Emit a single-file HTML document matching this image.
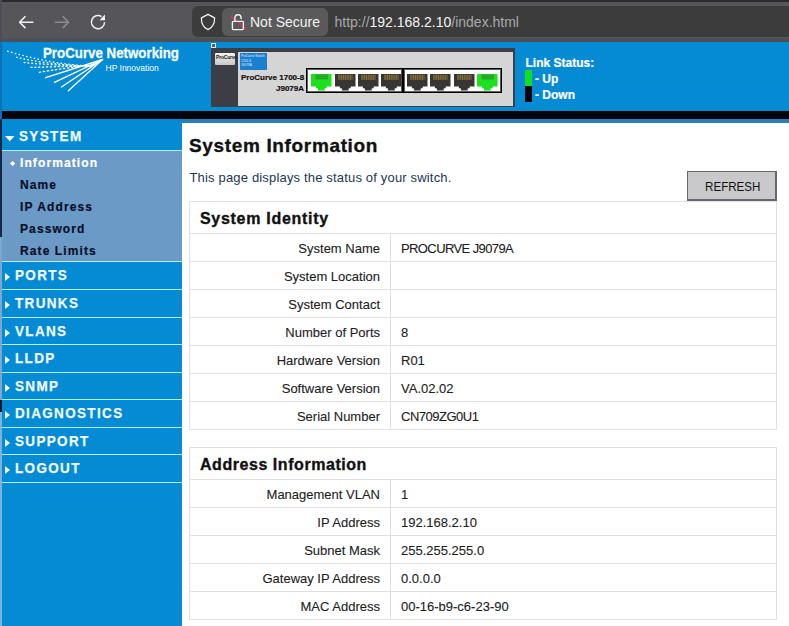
<!DOCTYPE html>
<html><head><meta charset="utf-8">
<style>
*{margin:0;padding:0;box-sizing:border-box}
html,body{width:789px;height:626px;overflow:hidden;background:#fff;font-family:"Liberation Sans",sans-serif}
.a{position:absolute}
#tb{left:0;top:0;width:789px;height:42px;background:#56555a}
#tbtop{left:0;top:0;width:789px;height:2px;background:#2a2a2f}
#tbbot{left:0;top:38px;width:789px;height:4px;background:#4c5157}
#lstrip{left:0;top:0;width:2px;height:626px;background:linear-gradient(#4a4e58 0,#4a4e58 42px,#0a72b4 42px,#0a72b4 119px,#14284a 119px,#14284a 237px,#7aa8d0 237px,#7aa8d0 400px,#101830 400px,#101830 412px,#7ab4dc 412px,#7ab4dc 626px)}
#url{left:192px;top:6px;width:600px;height:31px;border-radius:6px;background:#3c3c3d}
#pill{left:222px;top:8px;width:106px;height:28px;border-radius:6px;background:#5a5a5b}
#hdr{left:2px;top:42px;width:787px;height:69px;background:#058ad4}
#blk{left:2px;top:111px;width:787px;height:8px;background:#04040c}
#strip{left:182px;top:119px;width:607px;height:4px;background:#2a7db5}
#side{left:2px;top:119px;width:180px;height:507px;background:#058ad4}
#content{left:182px;top:123px;width:607px;height:503px;background:#fff}
.sep{position:absolute;left:2px;width:180px;height:1px;background:#b4f2fb}
.mi{position:absolute;left:15px;color:#f0fbff;-webkit-text-stroke:0.25px #f0fbff;font-weight:bold;font-size:15.5px;letter-spacing:1.55px;line-height:15px;transform:scaleX(0.87);transform-origin:0 0;white-space:pre}
.tri{position:absolute;left:4.5px;width:0;height:0;border-top:4.8px solid transparent;border-bottom:4.8px solid transparent;border-left:5.8px solid #f0fbff}
.si{position:absolute;left:20px;color:#0b0f2a;font-weight:bold;font-size:12px;letter-spacing:1.1px;line-height:12px;-webkit-text-stroke:0.2px currentColor}
.lab,.val{-webkit-text-stroke:0.12px #1e1e1e}
#h1,#th1,#th2{-webkit-text-stroke:0.35px #111}
#t_ls,#t_up,#t_down{-webkit-text-stroke:0.2px #fff}
#t_pc17,#t_j9{-webkit-text-stroke:0.2px #111}
</style></head><body>
<div id="tb" class="a"></div>
<div id="tbtop" class="a"></div>
<div id="tbbot" class="a"></div>
<div id="url" class="a"></div>
<div id="pill" class="a"></div>
<div id="hdr" class="a"></div>
<div id="blk" class="a"></div>
<div id="side" class="a"></div>
<div id="strip" class="a"></div>
<!-- logo -->
<svg class="a" style="left:0;top:42px" width="200" height="69" viewBox="0 42 200 69">
  <g stroke="#ffffff" stroke-width="1.25" fill="none" stroke-linecap="butt">
    <path d="M7.2 51.1 Q50 64 90 66 L102.5 59.5" stroke-dasharray="1.6 2.3"/>
    <path d="M16 57.2 Q50 65 90 66 L102.5 59.5" stroke-dasharray="1.8 2.1"/>
    <path d="M23.6 62.5 Q55 65.5 90 66 L102.5 59.5" stroke-dasharray="2 1.9"/>
    <path d="M30.4 67.4 Q60 66.5 90 66 L102.5 59.5" stroke-dasharray="2.2 1.7"/>
    <path d="M38.8 72.4 Q65 68 92 65 L102.5 59.5" stroke-dasharray="2.5 1.6"/>
  </g>
  <g stroke="#ffffff" stroke-width="1.35" fill="none" stroke-linecap="round">
    <path d="M45.6 77.7 L102.5 59.5"/>
    <path d="M54.5 82.3 L102.5 59.5"/>
    <path d="M61.5 87 L102.5 59.5"/>
    <path d="M68.4 90.8 L102.5 59.5"/>
  </g>
</svg>
<div id="t_pcn" class="a" style="left:43px;top:45px;font-size:14px;font-weight:bold;color:#f4fcff;line-height:16px;white-space:pre;letter-spacing:0px;transform:scaleX(0.95);transform-origin:0 0;-webkit-text-stroke:0.3px #f4fcff">ProCurve Networking</div>
<div id="t_hpi" class="a" style="left:105.5px;top:62.5px;font-size:8.5px;color:#fff;line-height:10px;white-space:pre">HP Innovation</div>
<!-- link status -->
<div id="t_ls" class="a" style="left:525.5px;top:55.5px;font-size:12px;font-weight:bold;color:#fff;line-height:14px;white-space:pre">Link Status:</div>
<div class="a" style="left:525px;top:70px;width:7px;height:16px;background:#10e020"></div>
<div class="a" style="left:525px;top:86px;width:7px;height:15.5px;background:#050510"></div>
<div id="t_up" class="a" style="left:535px;top:72px;font-size:12px;font-weight:bold;color:#fff;line-height:14px;white-space:pre">- Up</div>
<div id="t_down" class="a" style="left:535px;top:88px;font-size:12px;font-weight:bold;color:#fff;line-height:14px;white-space:pre">- Down</div>
<!-- switch -->
<div class="a" style="left:211px;top:43px;width:5px;height:5px;border:1px solid #e8e8f0;background:#3a6a9a"></div>
<div class="a" style="left:211px;top:48px;width:304px;height:59px;background:#3d3e45"></div>
<div class="a" style="left:238px;top:52px;width:275px;height:53.5px;background:#d5d5d5"></div>
<div class="a" style="left:215px;top:53px;width:20px;height:12px;background:linear-gradient(#f0f0f0,#c8c8c8);border-radius:1px"></div>
<div class="a" style="left:216px;top:55px;font-size:5px;font-weight:bold;color:#222;line-height:5px;letter-spacing:-0.2px">ProCurve</div>
<div class="a" style="left:240px;top:53px;width:27px;height:17px;background:#1b7fd0"></div>
<div class="a" style="left:241px;top:54px;font-size:3.2px;color:#e0f0ff;line-height:4.5px">ProCurve Switch<br>1700-8<br>J9079A</div>
<div id="t_pc17" class="a" style="left:241px;top:73px;font-size:8px;font-weight:bold;color:#111;line-height:10px;white-space:pre">ProCurve 1700-8</div>
<div id="t_j9" class="a" style="left:276px;top:83.5px;font-size:8px;font-weight:bold;color:#111;line-height:10px;white-space:pre">J9079A</div>
<div class="a" style="left:306px;top:68px;width:97px;height:25px;border:1px solid #000;box-shadow:inset 0 0 0 1px #5a5a5a;background:#fdfdfd"></div>
<div class="a" style="left:403px;top:68px;width:99px;height:25px;border:1px solid #000;box-shadow:inset 0 0 0 1px #5a5a5a;background:#fdfdfd"></div>
<svg class="a" style="left:311px;top:74px" width="21" height="17" viewBox="0 0 21 17"><path d="M0 0 H20.5 V12.4 H15.7 V14.3 H13.7 V16.6 H6.9 V14.3 H4.9 V12.4 H0 Z" fill="#1fe01f"/><rect x="4.5" y="0.5" width="12.5" height="5" fill="#28a828"/></svg>
<svg class="a" style="left:334.5px;top:74px" width="21" height="17" viewBox="0 0 21 17"><path d="M0 0 H20.5 V12.4 H15.7 V14.3 H13.7 V16.6 H6.9 V14.3 H4.9 V12.4 H0 Z" fill="#383632"/><rect x="3" y="0.8" width="14.5" height="5" fill="#84723e"/><rect x="3.6" y="0.8" width="0.7" height="5" fill="#4a4030"/><rect x="5.4" y="0.8" width="0.7" height="5" fill="#4a4030"/><rect x="7.2" y="0.8" width="0.7" height="5" fill="#4a4030"/><rect x="9.0" y="0.8" width="0.7" height="5" fill="#4a4030"/><rect x="10.8" y="0.8" width="0.7" height="5" fill="#4a4030"/><rect x="12.6" y="0.8" width="0.7" height="5" fill="#4a4030"/><rect x="14.4" y="0.8" width="0.7" height="5" fill="#4a4030"/><rect x="16.2" y="0.8" width="0.7" height="5" fill="#4a4030"/></svg>
<svg class="a" style="left:357.9px;top:74px" width="21" height="17" viewBox="0 0 21 17"><path d="M0 0 H20.5 V12.4 H15.7 V14.3 H13.7 V16.6 H6.9 V14.3 H4.9 V12.4 H0 Z" fill="#383632"/><rect x="3" y="0.8" width="14.5" height="5" fill="#84723e"/><rect x="3.6" y="0.8" width="0.7" height="5" fill="#4a4030"/><rect x="5.4" y="0.8" width="0.7" height="5" fill="#4a4030"/><rect x="7.2" y="0.8" width="0.7" height="5" fill="#4a4030"/><rect x="9.0" y="0.8" width="0.7" height="5" fill="#4a4030"/><rect x="10.8" y="0.8" width="0.7" height="5" fill="#4a4030"/><rect x="12.6" y="0.8" width="0.7" height="5" fill="#4a4030"/><rect x="14.4" y="0.8" width="0.7" height="5" fill="#4a4030"/><rect x="16.2" y="0.8" width="0.7" height="5" fill="#4a4030"/></svg>
<svg class="a" style="left:381px;top:74px" width="21" height="17" viewBox="0 0 21 17"><path d="M0 0 H20.5 V12.4 H15.7 V14.3 H13.7 V16.6 H6.9 V14.3 H4.9 V12.4 H0 Z" fill="#383632"/><rect x="3" y="0.8" width="14.5" height="5" fill="#84723e"/><rect x="3.6" y="0.8" width="0.7" height="5" fill="#4a4030"/><rect x="5.4" y="0.8" width="0.7" height="5" fill="#4a4030"/><rect x="7.2" y="0.8" width="0.7" height="5" fill="#4a4030"/><rect x="9.0" y="0.8" width="0.7" height="5" fill="#4a4030"/><rect x="10.8" y="0.8" width="0.7" height="5" fill="#4a4030"/><rect x="12.6" y="0.8" width="0.7" height="5" fill="#4a4030"/><rect x="14.4" y="0.8" width="0.7" height="5" fill="#4a4030"/><rect x="16.2" y="0.8" width="0.7" height="5" fill="#4a4030"/></svg>
<svg class="a" style="left:406.8px;top:74px" width="21" height="17" viewBox="0 0 21 17"><path d="M0 0 H20.5 V12.4 H15.7 V14.3 H13.7 V16.6 H6.9 V14.3 H4.9 V12.4 H0 Z" fill="#383632"/><rect x="3" y="0.8" width="14.5" height="5" fill="#84723e"/><rect x="3.6" y="0.8" width="0.7" height="5" fill="#4a4030"/><rect x="5.4" y="0.8" width="0.7" height="5" fill="#4a4030"/><rect x="7.2" y="0.8" width="0.7" height="5" fill="#4a4030"/><rect x="9.0" y="0.8" width="0.7" height="5" fill="#4a4030"/><rect x="10.8" y="0.8" width="0.7" height="5" fill="#4a4030"/><rect x="12.6" y="0.8" width="0.7" height="5" fill="#4a4030"/><rect x="14.4" y="0.8" width="0.7" height="5" fill="#4a4030"/><rect x="16.2" y="0.8" width="0.7" height="5" fill="#4a4030"/></svg>
<svg class="a" style="left:430.4px;top:74px" width="21" height="17" viewBox="0 0 21 17"><path d="M0 0 H20.5 V12.4 H15.7 V14.3 H13.7 V16.6 H6.9 V14.3 H4.9 V12.4 H0 Z" fill="#383632"/><rect x="3" y="0.8" width="14.5" height="5" fill="#84723e"/><rect x="3.6" y="0.8" width="0.7" height="5" fill="#4a4030"/><rect x="5.4" y="0.8" width="0.7" height="5" fill="#4a4030"/><rect x="7.2" y="0.8" width="0.7" height="5" fill="#4a4030"/><rect x="9.0" y="0.8" width="0.7" height="5" fill="#4a4030"/><rect x="10.8" y="0.8" width="0.7" height="5" fill="#4a4030"/><rect x="12.6" y="0.8" width="0.7" height="5" fill="#4a4030"/><rect x="14.4" y="0.8" width="0.7" height="5" fill="#4a4030"/><rect x="16.2" y="0.8" width="0.7" height="5" fill="#4a4030"/></svg>
<svg class="a" style="left:454px;top:74px" width="21" height="17" viewBox="0 0 21 17"><path d="M0 0 H20.5 V12.4 H15.7 V14.3 H13.7 V16.6 H6.9 V14.3 H4.9 V12.4 H0 Z" fill="#383632"/><rect x="3" y="0.8" width="14.5" height="5" fill="#84723e"/><rect x="3.6" y="0.8" width="0.7" height="5" fill="#4a4030"/><rect x="5.4" y="0.8" width="0.7" height="5" fill="#4a4030"/><rect x="7.2" y="0.8" width="0.7" height="5" fill="#4a4030"/><rect x="9.0" y="0.8" width="0.7" height="5" fill="#4a4030"/><rect x="10.8" y="0.8" width="0.7" height="5" fill="#4a4030"/><rect x="12.6" y="0.8" width="0.7" height="5" fill="#4a4030"/><rect x="14.4" y="0.8" width="0.7" height="5" fill="#4a4030"/><rect x="16.2" y="0.8" width="0.7" height="5" fill="#4a4030"/></svg>
<svg class="a" style="left:476.8px;top:74px" width="21" height="17" viewBox="0 0 21 17"><path d="M0 0 H20.5 V12.4 H15.7 V14.3 H13.7 V16.6 H6.9 V14.3 H4.9 V12.4 H0 Z" fill="#1fe01f"/><rect x="4.5" y="0.5" width="12.5" height="5" fill="#28a828"/></svg>

<div id="content" class="a"></div>

<!-- content -->
<div id="h1" class="a" style="left:189px;top:134.5px;font-size:19px;font-weight:bold;color:#111;letter-spacing:0.65px;line-height:22px;white-space:pre">System Information</div>
<div id="desc" class="a" style="left:189.5px;top:169.5px;font-size:13px;color:#1c3754;letter-spacing:0.17px;line-height:16px;white-space:pre">This page displays the status of your switch.</div>
<div id="btn" class="a" style="left:687px;top:171px;width:90px;height:30px;background:#c9c9cc;border:solid #66666e;border-width:1.5px 2px 2px 1.5px"></div>
<div id="btnt" class="a" style="left:704.5px;top:178.5px;font-size:13.5px;color:#111;letter-spacing:0px;line-height:16px;white-space:pre;transform:scaleX(0.86);transform-origin:0 0">REFRESH</div>
<div class="a" style="left:189px;top:201px;width:588px;height:229px;border:1px solid #dfe1e4"></div>
<div class="a" style="left:189px;top:233px;width:588px;height:1px;background:#dfe1e4"></div>
<div id="th1" class="a" style="left:200px;top:210px;font-size:16px;font-weight:bold;color:#111;letter-spacing:0.7px;line-height:18px;white-space:pre">System Identity</div>
<div class="a" style="left:390px;top:233px;width:1px;height:196px;background:#dfe1e4"></div>
<div class="a lab" style="left:189px;top:241px;width:191px;text-align:right;font-size:13px;color:#1e1e1e;line-height:16px;white-space:pre">System Name</div>
<div class="a val" style="left:401px;top:241px;font-size:13px;color:#1e1e1e;line-height:16px;white-space:pre;letter-spacing:-0.6px">PROCURVE J9079A</div>
<div class="a" style="left:189px;top:261px;width:588px;height:1px;background:#dfe1e4"></div>
<div class="a lab" style="left:189px;top:269px;width:191px;text-align:right;font-size:13px;color:#1e1e1e;line-height:16px;white-space:pre">System Location</div>
<div class="a" style="left:189px;top:289px;width:588px;height:1px;background:#dfe1e4"></div>
<div class="a lab" style="left:189px;top:297px;width:191px;text-align:right;font-size:13px;color:#1e1e1e;line-height:16px;white-space:pre">System Contact</div>
<div class="a" style="left:189px;top:317px;width:588px;height:1px;background:#dfe1e4"></div>
<div class="a lab" style="left:189px;top:325px;width:191px;text-align:right;font-size:13px;color:#1e1e1e;line-height:16px;white-space:pre">Number of Ports</div>
<div class="a val" style="left:401px;top:325px;font-size:13px;color:#1e1e1e;line-height:16px;white-space:pre;letter-spacing:0px">8</div>
<div class="a" style="left:189px;top:345px;width:588px;height:1px;background:#dfe1e4"></div>
<div class="a lab" style="left:189px;top:353px;width:191px;text-align:right;font-size:13px;color:#1e1e1e;line-height:16px;white-space:pre">Hardware Version</div>
<div class="a val" style="left:401px;top:353px;font-size:13px;color:#1e1e1e;line-height:16px;white-space:pre;letter-spacing:0px">R01</div>
<div class="a" style="left:189px;top:373px;width:588px;height:1px;background:#dfe1e4"></div>
<div class="a lab" style="left:189px;top:381px;width:191px;text-align:right;font-size:13px;color:#1e1e1e;line-height:16px;white-space:pre">Software Version</div>
<div class="a val" style="left:401px;top:381px;font-size:13px;color:#1e1e1e;line-height:16px;white-space:pre;letter-spacing:0px">VA.02.02</div>
<div class="a" style="left:189px;top:401px;width:588px;height:1px;background:#dfe1e4"></div>
<div class="a lab" style="left:189px;top:409px;width:191px;text-align:right;font-size:13px;color:#1e1e1e;line-height:16px;white-space:pre">Serial Number</div>
<div class="a val" style="left:401px;top:409px;font-size:13px;color:#1e1e1e;line-height:16px;white-space:pre;letter-spacing:-0.5px">CN709ZG0U1</div>
<div class="a" style="left:189px;top:447px;width:588px;height:173px;border:1px solid #dfe1e4"></div>
<div class="a" style="left:189px;top:479px;width:588px;height:1px;background:#dfe1e4"></div>
<div id="th2" class="a" style="left:200px;top:456px;font-size:16px;font-weight:bold;color:#111;letter-spacing:0.55px;line-height:18px;white-space:pre">Address Information</div>
<div class="a" style="left:390px;top:479px;width:1px;height:140px;background:#dfe1e4"></div>
<div class="a lab" style="left:189px;top:487px;width:191px;text-align:right;font-size:13px;color:#1e1e1e;line-height:16px;white-space:pre">Management VLAN</div>
<div class="a val" style="left:401px;top:487px;font-size:13px;color:#1e1e1e;line-height:16px;white-space:pre;letter-spacing:0px">1</div>
<div class="a" style="left:189px;top:507px;width:588px;height:1px;background:#dfe1e4"></div>
<div class="a lab" style="left:189px;top:515px;width:191px;text-align:right;font-size:13px;color:#1e1e1e;line-height:16px;white-space:pre">IP Address</div>
<div class="a val" style="left:401px;top:515px;font-size:13px;color:#1e1e1e;line-height:16px;white-space:pre;letter-spacing:0px">192.168.2.10</div>
<div class="a" style="left:189px;top:535px;width:588px;height:1px;background:#dfe1e4"></div>
<div class="a lab" style="left:189px;top:543px;width:191px;text-align:right;font-size:13px;color:#1e1e1e;line-height:16px;white-space:pre">Subnet Mask</div>
<div class="a val" style="left:401px;top:543px;font-size:13px;color:#1e1e1e;line-height:16px;white-space:pre;letter-spacing:0px">255.255.255.0</div>
<div class="a" style="left:189px;top:563px;width:588px;height:1px;background:#dfe1e4"></div>
<div class="a lab" style="left:189px;top:571px;width:191px;text-align:right;font-size:13px;color:#1e1e1e;line-height:16px;white-space:pre">Gateway IP Address</div>
<div class="a val" style="left:401px;top:571px;font-size:13px;color:#1e1e1e;line-height:16px;white-space:pre;letter-spacing:0px">0.0.0.0</div>
<div class="a" style="left:189px;top:591px;width:588px;height:1px;background:#dfe1e4"></div>
<div class="a lab" style="left:189px;top:599px;width:191px;text-align:right;font-size:13px;color:#1e1e1e;line-height:16px;white-space:pre">MAC Address</div>
<div class="a val" style="left:401px;top:599px;font-size:13px;color:#1e1e1e;line-height:16px;white-space:pre;letter-spacing:0px">00-16-b9-c6-23-90</div>
<!-- sidebar -->
<div class="a" style="left:2px;top:151px;width:180px;height:110px;background:#6a9ac5"></div>
<div class="sep" style="top:150px"></div>
<div class="sep" style="top:261px"></div>
<div class="sep" style="top:289px"></div>
<div class="sep" style="top:317px"></div>
<div class="sep" style="top:344px"></div>
<div class="sep" style="top:372px"></div>
<div class="sep" style="top:399px"></div>
<div class="sep" style="top:427px"></div>
<div class="sep" style="top:454px"></div>
<div class="sep" style="top:482px"></div>
<svg class="a" style="left:5px;top:135.5px" width="10" height="6" viewBox="0 0 10 6"><path d="M0 0 H9.5 L4.75 5.3 Z" fill="#fff"/></svg>
<div id="m_system" class="mi" style="left:18.5px;top:128px">SYSTEM</div>
<svg class="a" style="left:9.5px;top:159px" width="6" height="9" viewBox="0 0 6 9"><path d="M2.6 2 L5.2 4.6 L2.6 7.2 L0 4.6 Z" fill="#fff"/></svg>
<div id="s_0" class="si" style="top:157px;color:#ffffff">Information</div>
<div id="s_1" class="si" style="top:179px;color:#0b0f2a">Name</div>
<div id="s_2" class="si" style="top:201px;color:#0b0f2a">IP Address</div>
<div id="s_3" class="si" style="top:223px;color:#0b0f2a">Password</div>
<div id="s_4" class="si" style="top:245px;color:#0b0f2a">Rate Limits</div>
<div class="tri" style="top:273px"></div>
<div id="m_0" class="mi" style="top:267px">PORTS</div>
<div class="tri" style="top:301px"></div>
<div id="m_1" class="mi" style="top:295px">TRUNKS</div>
<div class="tri" style="top:329px"></div>
<div id="m_2" class="mi" style="top:323px">VLANS</div>
<div class="tri" style="top:356px"></div>
<div id="m_3" class="mi" style="top:350px">LLDP</div>
<div class="tri" style="top:384px"></div>
<div id="m_4" class="mi" style="top:378px">SNMP</div>
<div class="tri" style="top:411px"></div>
<div id="m_5" class="mi" style="top:405px">DIAGNOSTICS</div>
<div class="tri" style="top:439px"></div>
<div id="m_6" class="mi" style="top:433px">SUPPORT</div>
<div class="tri" style="top:466px"></div>
<div id="m_7" class="mi" style="top:460px">LOGOUT</div>


<!-- toolbar icons -->
<svg class="a" style="left:0;top:0" width="330" height="42" viewBox="0 0 330 42">
  <g fill="none" stroke="#f2f2f2" stroke-width="1.6" stroke-linecap="round" stroke-linejoin="round">
    <path d="M19.6 22.3 H32.8 M25 16.7 L19.6 22.3 L25 27.6"/>
  </g>
  <g fill="none" stroke="#8c8c8e" stroke-width="1.6" stroke-linecap="round" stroke-linejoin="round">
    <path d="M55.4 22.3 H68.6 M63.2 16.7 L68.6 22.3 L63.2 27.6"/>
  </g>
  <g fill="none" stroke="#f2f2f2" stroke-width="1.5" stroke-linecap="butt">
    <path d="M104.6 22.3 A6.6 6.6 0 1 1 101.6 16.6"/>
  </g>
  <path d="M104.9 14.6 L105 20.2 L99.6 20.2 Z" fill="#f2f2f2"/>
  <path d="M208 14.4 L214.6 17.9 C214.8 23.3 212.6 27.3 208 29.7 C203.4 27.3 201.2 23.3 201.4 17.9 Z" fill="none" stroke="#f2f2f2" stroke-width="1.3" stroke-linejoin="round"/>
  <path d="M230.6 16 L246.6 29.6" stroke="#a8405c" stroke-width="2.2"/>
  <g fill="none" stroke="#f2f2f2" stroke-width="1.4">
    <path d="M234.9 21.4 V17.8 A3.1 3.1 0 0 1 241.1 17.8 V19.2"/>
    <rect x="232.4" y="21.4" width="11" height="8.2" rx="1"/>
  </g>
</svg>
<div id="t_ns" class="a" style="left:250px;top:14px;font-size:14px;line-height:17px;color:#f4f4f4">Not Secure</div>
<div id="t_url" class="a" style="left:334.5px;top:14px;font-size:14px;line-height:17px;color:#a8a8aa;white-space:pre">http://<span style="color:#f4f4f4">192.168.2.10</span>/index.html</div>
<div id="lstrip" class="a"></div>
</body></html>
